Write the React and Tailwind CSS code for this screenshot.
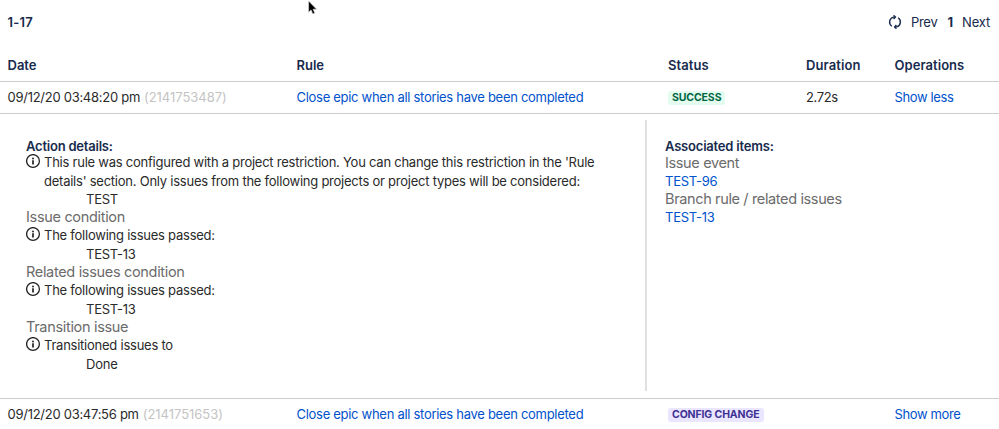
import React from "react";

const acciones = [
    {
        titulo: '',
        lineas: [
            "This rule was configured with a project restriction. You can change this restriction in the 'Rule",
            "details' section. Only issues from the following projects or project types will be considered:",
        ],
        valor: 'TEST',
    },
    { titulo: 'Issue condition', lineas: ['The following issues passed:'], valor: 'TEST-13' },
    { titulo: 'Related issues condition', lineas: ['The following issues passed:'], valor: 'TEST-13' },
    { titulo: 'Transition issue', lineas: ['Transitioned issues to'], valor: 'Done' },
];

const asociados = [
    { titulo: 'Issue event', issue: 'TEST-96' },
    { titulo: 'Branch rule / related issues', issue: 'TEST-13' },
];

const InfoIcon = () => (
    <svg className="w-[15px] h-[15px] shrink-0 mt-px" viewBox="0 0 15 15" fill="none">
        <circle cx="7" cy="7" r="6.4" stroke="#222" strokeWidth="1.3" />
        <circle cx="7" cy="4.5" r=".95" fill="#222" />
        <path d="M7 6.3v4.2" stroke="#222" strokeWidth="1.7" />
    </svg>
);

const RefreshIcon = () => (
    <svg className="w-[14px] h-[14px]" viewBox="0 0 14 14" fill="none" stroke="#172b4d" strokeWidth="1.4">
        <path d="M3.8 11.2A5.1 5.1 0 0 1 5.4 2.1H7" />
        <path d="M10.2 2.8A5.1 5.1 0 0 1 8.6 11.9H7" />
        <path d="M5.6 .3 7.4 2.1 5.6 3.9" />
        <path d="M8.4 10.1 6.6 11.9 8.4 13.7" />
    </svg>
);

const Cursor = () => (
    <svg className="absolute left-[307px] top-0 w-[11px] h-[16px]" viewBox="0 0 11 16">
        <path d="M1.6 1v11.3l2.5-2.4 1.7 4 2-.9-1.7-3.8h3.5z" fill="#000" stroke="#ddd" strokeWidth=".6" />
    </svg>
);

const Row = ({ fecha, id, estado, estiloEstado, duracion, operacion }) => (
    <tr className="h-8 border-t border-[#cccccc]">
        <td className="pl-[7.5px] tracking-[-0.27px]">
            {fecha} <span className="ml-[0.5px] tracking-[-0.02px] text-[#c4c4c4]">({id})</span>
        </td>
        <td className="text-[#0052cc] pl-[0.5px] tracking-[-0.29px]">Close epic when all stories have been completed</td>
        <td>
            <span className={"block w-fit mt-[2px] h-[14px] px-[4px] rounded-[3px] text-[10.5px] leading-[14px] font-bold tracking-[-0.12px] " + estiloEstado}>
                {estado}
            </span>
        </td>
        <td className="tracking-[-0.35px]">{duracion}</td>
        <td className="text-[#0052cc] pl-[0.5px] tracking-[-0.38px]">{operacion}</td>
    </tr>
);

export const AuditLog = () => {
    return (
        <div className="relative w-[999px] h-[429px] overflow-hidden bg-white font-[Inter,sans-serif] text-[13px] leading-[18.3px] text-[#2a2a2a] whitespace-nowrap">
            <Cursor />
            <div className="flex items-center h-11 pl-[7.5px] pr-[9px] text-[#172b4d]">
                <span className="font-semibold tracking-[0.25px]">1-17</span>
                <div className="ml-auto flex items-center">
                    <RefreshIcon />
                    <span className="ml-[9px] tracking-[-0.25px]">Prev</span>
                    <span className="ml-[10px] font-bold">1</span>
                    <span className="ml-[9px] tracking-[-0.2px]">Next</span>
                </div>
            </div>
            <table className="w-full table-fixed border-collapse text-left">
                <colgroup>
                    <col className="w-[296px]" />
                    <col className="w-[372px]" />
                    <col className="w-[138px]" />
                    <col className="w-[88px]" />
                    <col />
                </colgroup>
                <thead>
                    <tr className="h-[37px] text-[#172b4d]">
                        <th className="pl-[7.5px] pt-[5px] font-semibold">Date</th>
                        <th className="pl-[0.5px] pt-[5px] font-semibold">Rule</th>
                        <th className="pt-[5px] font-semibold tracking-[0.1px]">Status</th>
                        <th className="pt-[5px] font-semibold tracking-[0.1px]">Duration</th>
                        <th className="pl-[0.5px] pt-[5px] font-semibold tracking-[0.05px]">Operations</th>
                    </tr>
                </thead>
                <tbody>
                    <Row
                        fecha="09/12/20 03:48:20 pm"
                        id="2141753487"
                        estado="SUCCESS"
                        estiloEstado="bg-[#e3fcef] text-[#006644]"
                        duracion="2.72s"
                        operacion="Show less"
                    />
                    <tr className="border-t border-[#cccccc]">
                        <td colSpan={5} className="p-0">
                            <div className="flex h-[284px] pt-[6px] pb-[7px] tracking-[-0.24px]">
                                <div className="w-[647px] pl-[26px] pt-[17px] border-r-2 border-[#e0e0e0]">
                                    <div className="font-semibold text-[#172b4d] tracking-[-0.22px] h-[16.8px]">Action details:</div>
                                    {acciones.map((accion, i) => (
                                        <div key={i}>
                                            {accion.titulo && <div className="text-[14.5px] tracking-[-0.32px] text-[#6b6b6b]">{accion.titulo}</div>}
                                            <div className="flex gap-[3px]">
                                                <InfoIcon />
                                                <div>
                                                    {accion.lineas.map((linea) => (
                                                        <div key={linea}>{linea}</div>
                                                    ))}
                                                </div>
                                            </div>
                                            <div className="pl-[60px]">{accion.valor}</div>
                                        </div>
                                    ))}
                                </div>
                                <div className="pl-[18px] pt-[17px]">
                                    <div className="font-semibold text-[#172b4d] tracking-[-0.2px] h-[17px]">Associated items:</div>
                                    {asociados.map((item) => (
                                        <div key={item.titulo}>
                                            <div className="text-[14.5px] tracking-[-0.36px] text-[#6b6b6b]">{item.titulo}</div>
                                            <div className="text-[#0052cc]">{item.issue}</div>
                                        </div>
                                    ))}
                                </div>
                            </div>
                        </td>
                    </tr>
                    <Row
                        fecha="09/12/20 03:47:56 pm"
                        id="2141751653"
                        estado="CONFIG CHANGE"
                        estiloEstado="bg-[#eae6ff] text-[#403294]"
                        duracion=""
                        operacion="Show more"
                    />
                </tbody>
            </table>
        </div>
    );
};

export default AuditLog;
